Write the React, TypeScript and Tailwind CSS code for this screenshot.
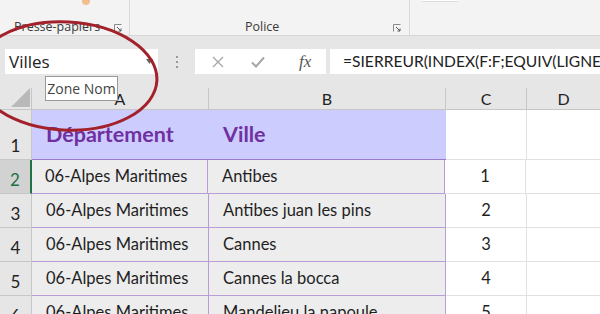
import React from "react";

const cellFont = { fontFamily: "Lato, 'Liberation Sans', sans-serif" };
const uiFont = { fontFamily: "'Open Sans', 'Noto Sans', sans-serif" };

const rows = [
  { n: 2, a: "06-Alpes Maritimes", b: "Antibes", c: "1", sel: true },
  { n: 3, a: "06-Alpes Maritimes", b: "Antibes juan les pins", c: "2" },
  { n: 4, a: "06-Alpes Maritimes", b: "Cannes", c: "3" },
  { n: 5, a: "06-Alpes Maritimes", b: "Cannes la bocca", c: "4" },
  { n: 6, a: "06-Alpes Maritimes", b: "Mandelieu la napoule", c: "5" },
];

function Launcher() {
  return (
    <svg width="8" height="8" viewBox="0 0 8 8" className="shrink-0">
      <path d="M0.5 7.5V0.5H7.5" fill="none" stroke="#8a8a8a" strokeWidth="1" />
      <path d="M3 3L7 7M7 4.5V7H4.5" fill="none" stroke="#555" strokeWidth="1" />
    </svg>
  );
}

export default function App() {
  return (
    <div className="relative w-[600px] h-[314px] overflow-hidden bg-white">
      {/* Ribbon */}
      <div className="flex h-[36px] bg-[#f3f3f3] border-b border-[#d6d6d6]" style={uiFont}>
        <div className="relative w-[130px] border-r border-[#d8d8d8] flex items-end">
          <div className="absolute left-[82px] top-0 w-[8px] h-[5px] bg-[#f2c08e] rounded-b-[4px]" />
          <span className="ml-[14px] text-[12.5px] text-[#3a3a3a] leading-[14px] mb-[1px]">Presse-papiers</span>
          <div className="ml-auto mr-[7px] mb-[3px]"><Launcher /></div>
        </div>
        <div className="relative w-[280px] border-r border-[#d8d8d8] flex items-end">
          <span className="absolute left-[115px] bottom-[1px] text-[12.5px] text-[#3a3a3a] leading-[14px]">Police</span>
          <div className="ml-auto mr-[8px] mb-[3px]"><Launcher /></div>
        </div>
        <div className="flex-1 relative">
          <div className="absolute left-[12px] top-0 w-[36px] h-[2px] bg-white border-b border-[#dcdcdc]" />
        </div>
      </div>

      {/* Formula band */}
      <div className="h-[52px] bg-[#e6e6e6] flex items-start pt-[13px]">
        <div className="ml-[5px] w-[153px] h-[25px] bg-white flex items-center relative">
          <span className="ml-[4px] text-[17px] text-[#222]" style={uiFont}>Villes</span>
          <svg className="absolute left-[141px] top-[10px]" width="7" height="5" viewBox="0 0 7 5">
            <path d="M0 0H7L3.5 5Z" fill="#666" />
          </svg>
        </div>
        <div className="w-[37px] h-[25px] flex flex-col items-center justify-center gap-[3px]">
          <div className="w-[2px] h-[2px] bg-[#9a9a9a]" />
          <div className="w-[2px] h-[2px] bg-[#9a9a9a]" />
          <div className="w-[2px] h-[2px] bg-[#9a9a9a]" />
        </div>
        <div className="w-[131px] h-[25px] bg-white flex items-center">
          <svg className="ml-[17px]" width="12" height="12" viewBox="0 0 12 12">
            <path d="M1 1L11 11M11 1L1 11" stroke="#a6a6a6" strokeWidth="1.3" />
          </svg>
          <svg className="ml-[27px]" width="14" height="12" viewBox="0 0 14 12">
            <path d="M1 6.5L5 10.5L13 1.5" fill="none" stroke="#a6a6a6" strokeWidth="2" />
          </svg>
          <span className="ml-[34px] text-[17px] italic text-[#555]" style={{ fontFamily: "'Liberation Serif', serif" }}>fx</span>
        </div>
        <div className="ml-[4px] flex-1 h-[25px] bg-white flex items-center overflow-hidden whitespace-nowrap">
          <span className="ml-[13px] text-[15.6px] text-[#222]" style={cellFont}>=SIERREUR(INDEX(F:F;EQUIV(LIGNE()-1;E:E;0));"")</span>
        </div>
      </div>

      {/* Column headers */}
      <div className="flex h-[22px] bg-[#e6e6e6] border-b border-[#c6c6c6]" style={cellFont}>
        <div className="w-[32px] relative border-r border-[#c6c6c6]">
          <svg className="absolute right-[1px] bottom-[2px]" width="19" height="19" viewBox="0 0 19 19">
            <path d="M19 0V19H0Z" fill="#b9b9b9" />
          </svg>
        </div>
        <div className="w-[177px] border-r border-[#c6c6c6] flex items-center justify-center text-[16px] text-[#222]">A</div>
        <div className="w-[237px] border-r border-[#c6c6c6] flex items-center justify-center text-[16px] text-[#222]">B</div>
        <div className="w-[81px] border-r border-[#c6c6c6] flex items-center justify-center text-[16px] text-[#222]">C</div>
        <div className="flex-1 flex items-center justify-center text-[16px] text-[#222]">D</div>
      </div>

      {/* Row 1 */}
      <div className="flex h-[50px]" style={cellFont}>
        <div className="w-[32px] bg-[#e6e6e6] border-r border-b border-[#c6c6c6] flex items-end justify-center pb-[1px] text-[17px] text-[#222]">1</div>
        <div className="w-[414px] bg-[#ccccff] border-b border-[#9b7ccc] flex items-center">
          <span className="ml-[14px] w-[177px] text-[21.5px] font-bold text-[#7030a0]">Département</span>
          <span className="text-[21.5px] font-bold text-[#7030a0]">Ville</span>
        </div>
        <div className="w-[81px] border-r border-b border-[#e1e1e1]" />
        <div className="flex-1 border-b border-[#e1e1e1]" />
      </div>

      {rows.map((r) => (
        <div key={r.n} className="flex h-[34px] shrink-0" style={cellFont}>
          <div
            className={
              r.sel
                ? "w-[32px] bg-[#d2d2d2] border-r-2 border-r-[#217346] border-b border-b-[#c6c6c6] flex items-end justify-center pb-[1px] text-[17px] text-[#217346]"
                : "w-[32px] bg-[#e6e6e6] border-r border-b border-[#c6c6c6] flex items-end justify-center pb-[1px] text-[17px] text-[#222]"
            }
          >
            {r.n}
          </div>
          <div className={r.sel ? "w-[176px] bg-[#ededed] border-r border-b border-[#b99dd9] flex items-center pl-[13px] text-[16.5px] text-[#1f1f1f]" : "w-[177px] bg-[#ededed] border-r border-b border-[#b99dd9] flex items-center pl-[14px] text-[16.5px] text-[#1f1f1f]"}>
            {r.a}
          </div>
          <div className="w-[237px] bg-[#ededed] border-r border-b border-[#b99dd9] flex items-center pl-[14px] text-[16.5px] text-[#1f1f1f] whitespace-nowrap">
            {r.b}
          </div>
          <div className="w-[81px] border-r border-b border-[#e1e1e1] flex items-center justify-center text-[16.5px] text-[#1f1f1f]">
            {r.c}
          </div>
          <div className="flex-1 border-b border-[#e1e1e1]" />
        </div>
      ))}

      {/* Tooltip */}
      <div
        className="absolute left-[45px] top-[76px] w-[73px] h-[25px] bg-white border border-[#9a9a9a] flex items-center justify-center text-[14px] text-[#444]"
        style={uiFont}
      >
        Zone Nom
      </div>

      {/* Red ellipse */}
      <svg className="absolute left-0 top-0 pointer-events-none" width="600" height="314" viewBox="0 0 600 314">
        <ellipse cx="66" cy="76" rx="91" ry="54" transform="rotate(3 66 76)" fill="none" stroke="#a3212a" strokeWidth="3" />
      </svg>
    </div>
  );
}
